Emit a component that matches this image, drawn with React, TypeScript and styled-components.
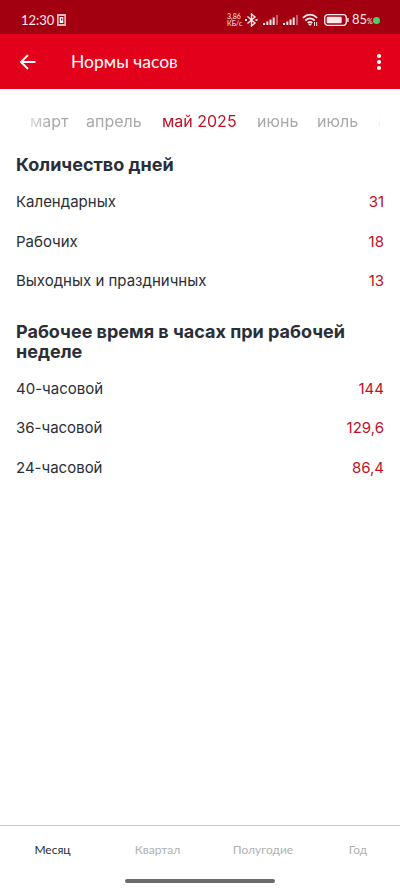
import React from "react";
import styled, { createGlobalStyle } from "styled-components";

const GlobalStyle = createGlobalStyle`
  * { box-sizing: border-box; }
  body { margin: 0; background: #fff; }
`;

const Screen = styled.div`
  width: 400px;
  height: 889px;
  display: flex;
  flex-direction: column;
  overflow: hidden;
  background: #fff;
  color: #292e37;
  font-family: "Inter", sans-serif;
`;

const StatusBar = styled.div`
  flex: none;
  height: 34px;
  padding: 6px 20px 0 21px;
  display: flex;
  align-items: center;
  background: #a20011;
  color: #fbe9ea;
  font-family: "Lato", sans-serif;
`;

const Clock = styled.span`
  width: 36px;
  font-size: 13px;
  line-height: 16px;
  white-space: nowrap;
`;

const StatusIcons = styled.div`
  margin-left: auto;
  display: flex;
  align-items: center;
`;

const Speed = styled.div`
  width: 18px;
  font-size: 7px;
  line-height: 7px;
  white-space: nowrap;
`;

const Percent = styled.span`
  width: 21px;
  font-size: 13px;
  line-height: 16px;
  white-space: nowrap;
  small { font-size: 7px; }
`;

const Dot = styled.i`
  width: 7px;
  height: 7px;
  border-radius: 50%;
  background: #48cf6b;
`;

const Toolbar = styled.header`
  flex: none;
  height: 55px;
  padding: 0 17px 0 19px;
  display: flex;
  align-items: center;
  background: #e2001a;
  color: #fff;
`;

const Title = styled.h1`
  flex: 1;
  margin: 0 0 0 34px;
  font: 400 17.5px/24px "Lato", sans-serif;
`;

const Months = styled.nav`
  flex: none;
  height: 64px;
  margin: 0 20px 0 30px;
  display: flex;
  align-items: center;
  overflow: hidden;
  white-space: nowrap;
  gap: 18px;
  mask-image: linear-gradient(to right, rgba(0,0,0,.4), #000 20px, #000 330px, rgba(0,0,0,.2) 350px);
`;

const Month = styled.span<{ $w: number; $active?: boolean }>`
  flex: none;
  width: ${(p) => p.$w}px;
  font-size: 16px;
  line-height: 20px;
  color: ${(p) => (p.$active ? "#c01128" : "#a7a9ab")};
`;

const Content = styled.main`
  flex: 1;
  padding: 2px 16px 0;
`;

const Heading = styled.h2`
  margin: 0;
  font-size: 18px;
  line-height: 20px;
  font-weight: 700;
`;

const Rows = styled.div`
  padding: 7px 0 21px;
`;

const Row = styled.div`
  height: 39.5px;
  display: flex;
  align-items: center;
  justify-content: space-between;
  font-size: 15px;
`;

const Value = styled.span`
  color: #c01128;
`;

const Tabs = styled.footer`
  flex: none;
  height: 64px;
  padding-top: 15px;
  border-top: 1px solid #c9c9c9;
  display: flex;
  flex-direction: column;
  justify-content: space-between;
  align-items: center;
`;

const TabList = styled.div`
  width: 100%;
  display: grid;
  grid-template-columns: 105px 105px 106px 84px;
  text-align: center;
  font: 400 12px/18px "Lato", sans-serif;
`;

const Tab = styled.span<{ $active?: boolean }>`
  color: ${(p) => (p.$active ? "#292e37" : "#b0b0b0")};
`;

const Handle = styled.div`
  width: 150px;
  height: 4px;
  margin-bottom: 6px;
  border-radius: 2px;
  background: #6b6b6b;
`;

const days = [["Календарных", "31"], ["Рабочих", "18"], ["Выходных и праздничных", "13"]];
const hours = [["40-часовой", "144"], ["36-часовой", "129,6"], ["24-часовой", "86,4"]];

const Signal = () => (
  <svg width="20" height="12" viewBox="0 0 20 12" fill="currentColor">
    <rect x="1" y="9" width="2" height="2" /><rect x="4.3" y="7.5" width="2" height="3.5" />
    <rect x="7.5" y="5.5" width="2" height="5.5" /><rect x="10.7" y="3.5" width="2" height="7.5" />
    <rect x="14" y="1" width="2" height="10" opacity=".4" />
  </svg>
);

export default function App() {
  return (
    <Screen>
      <GlobalStyle />
      <StatusBar>
        <Clock>12:30</Clock>
        <svg width="9" height="12" viewBox="0 0 9 12"><rect width="9" height="12" fill="#e8b9bd" /><rect x="2.2" y="2.5" width="4.6" height="7" fill="#fff" stroke="#a20011" /><rect x="4" y="4.5" width="1.4" height="2" fill="#a20011" /></svg>
        <StatusIcons>
          <Speed>3,86<br />КБ/с</Speed>
          <svg width="17" height="14" viewBox="0 0 17 14" fill="none" stroke="currentColor" strokeWidth="1.4"><path d="M2.5 3.5 10 10 6.5 13V1L10 4 2.5 10.5" /><path d="M0 7h2M10.5 7h2" strokeWidth="2" /></svg>
          <Signal /><Signal />
          <svg width="22" height="14" viewBox="0 0 22 14" fill="none" stroke="currentColor" strokeWidth="1.7"><path d="M.8 4.8Q8 -1.6 15.2 4.8M3.3 7.5Q8 3.3 12.7 7.5M5.7 10Q8 8 10.3 10" /><path d="m6.5 11 1.5 1.7L9.5 11z" fill="currentColor" strokeWidth=".5" /><path d="M12.5 9v4M14.7 9v4" strokeWidth="1" /></svg>
          <svg width="28" height="12" viewBox="0 0 28 12"><rect x=".7" y=".7" width="21.6" height="10.6" rx="3" fill="none" stroke="currentColor" strokeWidth="1.3" /><rect x="2.7" y="2.7" width="15" height="6.6" rx="1" fill="currentColor" /><rect x="23.2" y="4" width="1.4" height="4" fill="currentColor" /></svg>
          <Percent>85<small>%</small></Percent>
          <Dot />
        </StatusIcons>
      </StatusBar>
      <Toolbar>
        <svg width="18" height="18" viewBox="0 0 18 18" fill="none" stroke="currentColor" strokeWidth="1.9"><path d="M16.5 9H2.5M9 2 2 9l7 7" /></svg>
        <Title>Нормы часов</Title>
        <svg width="8" height="20" viewBox="0 0 8 20" fill="currentColor"><circle cx="4" cy="4" r="2.1" /><circle cx="4" cy="10" r="2.1" /><circle cx="4" cy="16" r="2.1" /></svg>
      </Toolbar>
      <Months>
        <Month $w={38}>март</Month><Month $w={58}>апрель</Month><Month $w={77} $active>май 2025</Month>
        <Month $w={42}>июнь</Month><Month $w={43}>июль</Month><Month $w={50}>август</Month>
      </Months>
      <Content>
        <Heading>Количество дней</Heading>
        <Rows>{days.map(([a, b]) => <Row key={a}><span>{a}</span><Value>{b}</Value></Row>)}</Rows>
        <Heading>Рабочее время в часах при рабочей неделе</Heading>
        <Rows>{hours.map(([a, b]) => <Row key={a}><span>{a}</span><Value>{b}</Value></Row>)}</Rows>
      </Content>
      <Tabs>
        <TabList><Tab $active>Месяц</Tab><Tab>Квартал</Tab><Tab>Полугодие</Tab><Tab>Год</Tab></TabList>
        <Handle />
      </Tabs>
    </Screen>
  );
}
